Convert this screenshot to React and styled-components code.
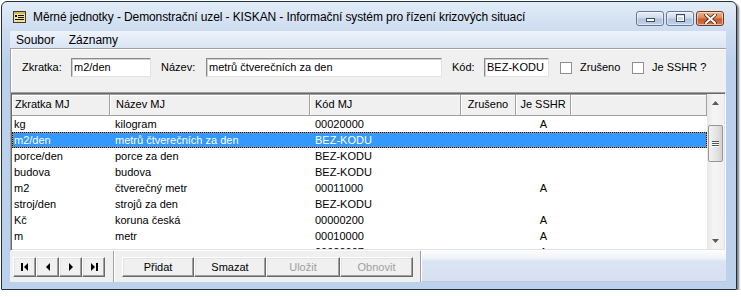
import React from "react";
import styled, { createGlobalStyle } from "styled-components";

const Global = createGlobalStyle`
  html, body {
    margin: 0;
    padding: 0;
    background: #ffffff;
  }
  body {
    font-family: "Liberation Sans", Arial, sans-serif;
    font-size: 11px;
    color: #000;
  }
  * {
    box-sizing: border-box;
  }
`;

const Window = styled.div`
  margin: 1px 0 0 1px;
  width: 736px;
  height: 289px;
  border: 1px solid #24303d;
  border-radius: 6px 6px 1px 1px;
  background: linear-gradient(to bottom, #e2ecf8 0px, #cbdbef 30px, #bbd1eb 60px, #bcd2ec 100%);
  box-shadow: 2px 2px 2px rgba(0, 0, 0, 0.5);
  padding: 0 10px 7px 8px;
  display: flex;
  flex-direction: column;
`;

const TitleBar = styled.div`
  height: 29px;
  display: flex;
  align-items: center;
  padding: 0 2px 0 3px;
`;

const TitleText = styled.div`
  flex: 1;
  font-size: 12px;
  letter-spacing: -0.1px;
  white-space: nowrap;
  margin-left: 7px;
  margin-top: 1px;
`;

const Captions = styled.div`
  align-self: flex-start;
  margin-top: 9px;
  display: flex;
  gap: 2px;
`;

const CaptionButton = styled.div`
  width: 28px;
  height: 15px;
  border: 1px solid ${(p) => (p.$close ? "#6d3a26" : "#66768e")};
  border-radius: 3px;
  background: ${(p) =>
    p.$close
      ? "linear-gradient(to bottom, #eab38c 0%, #dd8a58 45%, #c5592c 55%, #d47a44 100%)"
      : "linear-gradient(to bottom, #e6edf7 0%, #cfdbeb 45%, #b0c3dc 55%, #c0d1e8 100%)"};
  box-shadow: inset 0 0 0 1px rgba(255, 255, 255, 0.5);
  display: flex;
  align-items: center;
  justify-content: center;
`;

const Client = styled.div`
  flex: 1;
  display: flex;
  flex-direction: column;
  background: #f0f0f0;
`;

const MenuBar = styled.div`
  height: 17px;
  display: flex;
  align-items: center;
  padding-left: 6px;
  font-size: 12px;
  background: linear-gradient(to bottom, #eef3fa, #d9e4f3);
`;

const MenuItem = styled.span`
  margin-right: 14px;
`;

const FilterPanel = styled.div`
  height: 44px;
  display: flex;
  align-items: flex-start;
  padding: 9px 0 0 11px;
  background: #f0f0f0;
  border-top: 1px solid #a0a0a0;
  border-left: 1px solid #a0a0a0;
  box-shadow: inset 1px 1px 0 #ffffff;
`;

const Label = styled.span`
  width: ${(p) => p.$w}px;
  line-height: 19px;
  white-space: nowrap;
  margin-right: ${(p) => p.$mr || 0}px;
`;

const Input = styled.div`
  width: ${(p) => p.$w}px;
  height: 19px;
  margin-right: ${(p) => p.$mr}px;
  background: #fff;
  border: 1px solid;
  border-color: #8a8a8a #e3e3e3 #e3e3e3 #8a8a8a;
  box-shadow: inset 1px 1px 0 #d0d0d0;
  padding-left: 2px;
  line-height: 17px;
  white-space: nowrap;
  overflow: hidden;
`;

const Check = styled.div`
  width: 12px;
  height: 12px;
  margin-top: 4px;
  margin-right: 8px;
  background: #fff;
  border: 1px solid #8e8f8f;
`;

const Grid = styled.div`
  height: 159px;
  display: flex;
  background: #fff;
  border: 1px solid;
  border-color: #a0a0a0 #ffffff #ffffff #a0a0a0;
  box-shadow: inset 1px 1px 0 #696969, inset -1px -1px 0 #e3e3e3;
  padding: 1px;
`;

const Table = styled.div`
  width: 695px;
  overflow: hidden;
`;

const Row = styled.div`
  display: flex;
  height: ${(p) => (p.$header ? 22 : 16)}px;
  color: ${(p) => (p.$selected ? "#fff" : "#000")};
  background: ${(p) => (p.$header ? "#f0f0f0" : p.$selected ? "#3399ff" : "transparent")};
  ${(p) =>
    p.$selected &&
    `
    outline: 1px dotted #1a1a1a;
    outline-offset: -1px;
    box-shadow: inset 0 0 0 1px #e08a2e;
  `}
`;

const HeadCell = styled.div`
  width: ${(p) => p.$w}px;
  flex: ${(p) => (p.$fill ? 1 : "none")};
  border-top: 1px solid #a0a0a0;
  border-right: 1px solid #a0a0a0;
  border-bottom: 1px solid #a0a0a0;
  box-shadow: inset 1px 1px 0 #ffffff;
  padding: 0 0 0 ${(p) => p.$pl}px;
  text-align: ${(p) => (p.$center ? "center" : "left")};
  line-height: 19px;
  white-space: nowrap;
  overflow: hidden;
`;

const Cell = styled.div`
  width: ${(p) => p.$w}px;
  flex: none;
  padding-left: ${(p) => p.$pl}px;
  text-align: ${(p) => (p.$center ? "center" : "left")};
  line-height: 16px;
  white-space: nowrap;
  overflow: hidden;
`;

const ScrollBar = styled.div`
  width: 17px;
  display: flex;
  flex-direction: column;
  background: linear-gradient(to right, #e8e8e8, #f5f5f5 40%, #f0f0f0);
`;

const ArrowBox = styled.div`
  height: 17px;
  display: flex;
  align-items: center;
  justify-content: center;
`;

const Track = styled.div`
  flex: 1;
  padding-top: 14px;
`;

const Thumb = styled.div`
  margin: 0 1px;
  height: 37px;
  border: 1px solid #979797;
  border-radius: 2px;
  background: linear-gradient(to right, #f2f2f2, #e6e6e6 50%, #d3d3d3);
  display: flex;
  flex-direction: column;
  align-items: center;
  justify-content: center;
  gap: 1px;
`;

const Grip = styled.div`
  width: 7px;
  height: 1px;
  background: #555;
  box-shadow: 0 1px 0 #fff;
`;

const BottomBar = styled.div`
  flex: 1;
  display: flex;
  align-items: stretch;
  padding-left: 3px;
  background: #f0f0f0;
`;

const ButtonRow = styled.div`
  display: flex;
  padding-top: 6px;
  height: 26px;
`;

const Button = styled.div`
  width: ${(p) => p.$w}px;
  height: 20px;
  display: flex;
  align-items: center;
  justify-content: center;
  background: #f0f0f0;
  border: 1px solid;
  border-color: #ffffff #696969 #696969 #ffffff;
  box-shadow: inset -1px -1px 0 #a0a0a0, inset 1px 1px 0 #e3e3e3;
  color: ${(p) => (p.$disabled ? "#a0a0a0" : "#000")};
  white-space: nowrap;
`;

const Separator = styled.div`
  width: 2px;
  margin: 0 ${(p) => p.$mr}px 0 ${(p) => p.$ml}px;
  border-left: 1px solid #a0a0a0;
  border-right: 1px solid #ffffff;
`;

const StatusArea = styled.div`
  flex: 1;
  background: linear-gradient(to bottom, #fbfcfe 0%, #eff3f9 25%, #dbe4f3 35%, #d6e0f1 100%);
  border-bottom: 1px solid #c0c8d4;
`;

const columns = [
  { key: "z", w: 98, pl: 2, hpl: 3, title: "Zkratka MJ" },
  { key: "n", w: 200, pl: 5, hpl: 6, title: "Název MJ" },
  { key: "k", w: 151, pl: 5, hpl: 5, title: "Kód MJ" },
  { key: "r", w: 55, pl: 0, hpl: 0, title: "Zrušeno", center: true },
  { key: "s", w: 55, pl: 0, hpl: 0, title: "Je SSHR", center: true },
];

const rows = [
  { id: 1, z: "kg", n: "kilogram", k: "00020000", r: "", s: "A" },
  { id: 2, z: "m2/den", n: "metrů čtverečních za den", k: "BEZ-KODU", r: "", s: "", selected: true },
  { id: 3, z: "porce/den", n: "porce za den", k: "BEZ-KODU", r: "", s: "" },
  { id: 4, z: "budova", n: "budova", k: "BEZ-KODU", r: "", s: "" },
  { id: 5, z: "m2", n: "čtverečný metr", k: "00011000", r: "", s: "A" },
  { id: 6, z: "stroj/den", n: "strojů za den", k: "BEZ-KODU", r: "", s: "" },
  { id: 7, z: "Kč", n: "koruna česká", k: "00000200", r: "", s: "A" },
  { id: 8, z: "m", n: "metr", k: "00010000", r: "", s: "A" },
  { id: 9, z: "", n: "", k: "00020007", r: "", s: "A" },
];

const FormIcon = () => (
  <svg width="13" height="12" viewBox="0 0 13 12">
    <rect x="0.5" y="0.5" width="12" height="11" fill="#f6e28c" stroke="#3a3a3a" />
    <rect x="1" y="1" width="11" height="2" fill="#d9b84e" />
    <rect x="2" y="4" width="2" height="2" fill="#111" />
    <rect x="5" y="4" width="6" height="1" fill="#111" />
    <rect x="5" y="6" width="6" height="1" fill="#111" />
    <rect x="2" y="8" width="9" height="1" fill="#111" />
  </svg>
);

const MinGlyph = () => (
  <svg width="11" height="8" viewBox="0 0 11 8">
    <rect x="1.5" y="3.5" width="8" height="3" fill="#fff" stroke="#3b4a60" />
  </svg>
);

const MaxGlyph = () => (
  <svg width="11" height="9" viewBox="0 0 11 9">
    <rect x="1.5" y="0.5" width="8" height="7" fill="none" stroke="#3b4a60" />
    <rect x="2.5" y="2.5" width="6" height="4" fill="#cfdcee" stroke="#fff" />
  </svg>
);

const CloseGlyph = () => (
  <svg width="13" height="10" viewBox="0 0 13 10">
    <path d="M2 1 L11 9 M11 1 L2 9" stroke="#5a2a18" strokeWidth="3.6" strokeLinecap="square" />
    <path d="M2 1 L11 9 M11 1 L2 9" stroke="#ffffff" strokeWidth="2" strokeLinecap="square" />
  </svg>
);

const NavGlyph = ({ kind }) => (
  <svg width="8" height="10" viewBox="0 0 8 10">
    {kind === "first" && (
      <>
        <rect x="0" y="1" width="2" height="8" fill="#000" />
        <polygon points="7,1 3,5 7,9" fill="#000" />
      </>
    )}
    {kind === "prev" && <polygon points="6,1 2,5 6,9" fill="#000" />}
    {kind === "next" && <polygon points="2,1 6,5 2,9" fill="#000" />}
    {kind === "last" && (
      <>
        <polygon points="1,1 5,5 1,9" fill="#000" />
        <rect x="6" y="1" width="2" height="8" fill="#000" />
      </>
    )}
  </svg>
);

const ScrollArrow = ({ up }) => (
  <svg width="7" height="4" viewBox="0 0 7 4">
    <polygon points={up ? "0,4 3.5,0 7,4" : "0,0 3.5,4 7,0"} fill="#5a5a5a" />
  </svg>
);

export default function App() {
  return (
    <>
      <Global />
      <Window>
        <TitleBar>
          <FormIcon />
          <TitleText>
            Měrné jednotky - Demonstrační uzel - KISKAN - Informační systém pro řízení krizových situací
          </TitleText>
          <Captions>
            <CaptionButton>
              <MinGlyph />
            </CaptionButton>
            <CaptionButton>
              <MaxGlyph />
            </CaptionButton>
            <CaptionButton $close>
              <CloseGlyph />
            </CaptionButton>
          </Captions>
        </TitleBar>

        <Client>
          <MenuBar>
            <MenuItem>Soubor</MenuItem>
            <MenuItem>Záznamy</MenuItem>
          </MenuBar>

          <FilterPanel>
            <Label $w={49}>Zkratka:</Label>
            <Input $w={80} $mr={10}>m2/den</Input>
            <Label $w={45}>Název:</Label>
            <Input $w={236} $mr={10}>metrů čtverečních za den</Input>
            <Label $w={32}>Kód:</Label>
            <Input $w={65} $mr={11}>BEZ-KODU</Input>
            <Check />
            <Label $w={40} $mr={12}>Zrušeno</Label>
            <Check />
            <Label $w={60}>Je SSHR ?</Label>
          </FilterPanel>

          <Grid>
            <Table>
              <Row $header>
                {columns.map((c) => (
                  <HeadCell key={c.key} $w={c.w} $pl={c.hpl} $center={c.center}>
                    {c.title}
                  </HeadCell>
                ))}
                <HeadCell $fill $pl={0} />
              </Row>
              {rows.map((r) => (
                <Row key={r.id} $selected={r.selected}>
                  {columns.map((c) => (
                    <Cell key={c.key} $w={c.w} $pl={c.pl} $center={c.center}>
                      {r[c.key]}
                    </Cell>
                  ))}
                </Row>
              ))}
            </Table>
            <ScrollBar>
              <ArrowBox>
                <ScrollArrow up />
              </ArrowBox>
              <Track>
                <Thumb>
                  <Grip />
                  <Grip />
                  <Grip />
                </Thumb>
              </Track>
              <ArrowBox>
                <ScrollArrow />
              </ArrowBox>
            </ScrollBar>
          </Grid>

          <BottomBar>
            <ButtonRow>
              <Button $w={23}>
                <NavGlyph kind="first" />
              </Button>
              <Button $w={23}>
                <NavGlyph kind="prev" />
              </Button>
              <Button $w={23}>
                <NavGlyph kind="next" />
              </Button>
              <Button $w={23}>
                <NavGlyph kind="last" />
              </Button>
            </ButtonRow>
            <Separator $ml={8} $mr={7} />
            <ButtonRow>
              <Button $w={72}>Přidat</Button>
              <Button $w={72}>Smazat</Button>
              <Button $w={74} $disabled>
                Uložit
              </Button>
              <Button $w={73} $disabled>
                Obnovit
              </Button>
            </ButtonRow>
            <Separator $ml={7} $mr={0} />
            <StatusArea />
          </BottomBar>
        </Client>
      </Window>
    </>
  );
}
